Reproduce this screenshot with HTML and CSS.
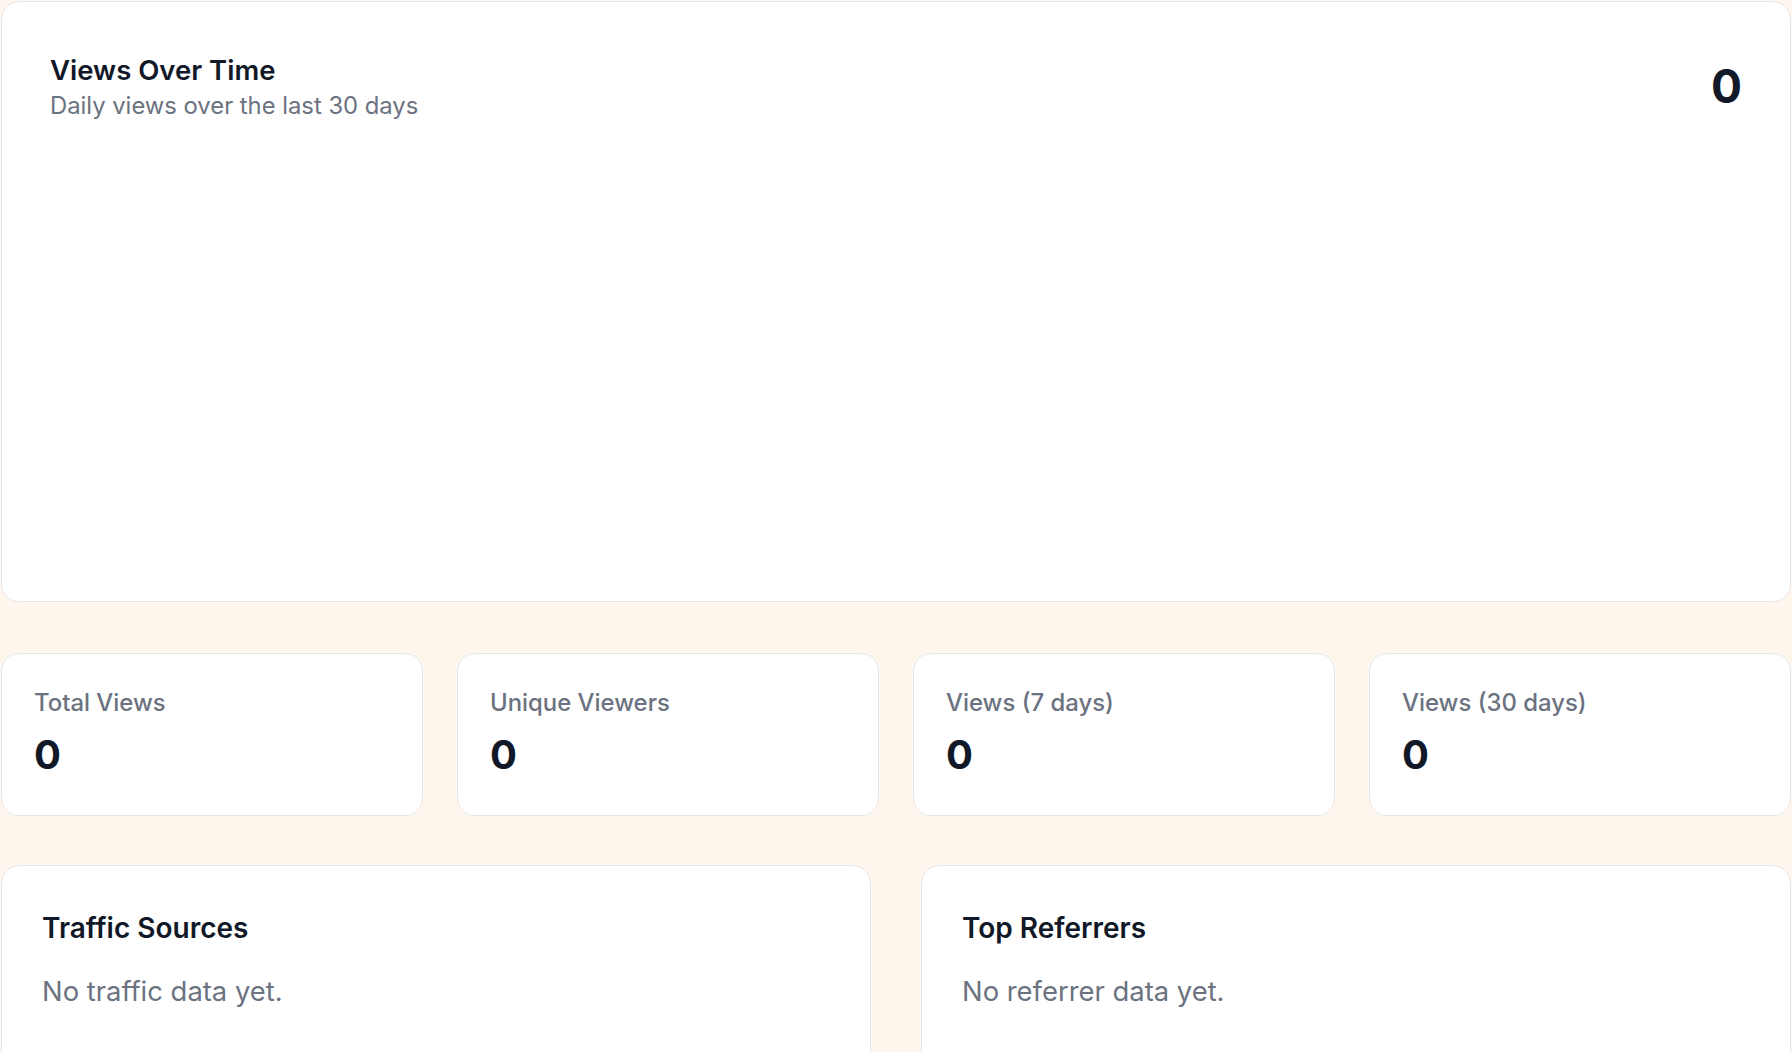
FILE: index.html
```html
<!DOCTYPE html>
<html lang="en">
<head>
<meta charset="utf-8">
<title>Analytics</title>
<link rel="stylesheet" href="styles.css">
</head>
<body>
<main class="page">
  <section class="card chart-card">
    <div class="chart-head">
      <div>
        <h2 class="card-title chart-title">Views Over Time</h2>
        <p class="card-sub">Daily views over the last 30 days</p>
      </div>
      <div class="chart-total">0</div>
    </div>
  </section>

  <section class="stats">
    <div class="card stat">
      <div class="stat-label">Total Views</div>
      <div class="stat-value">0</div>
    </div>
    <div class="card stat">
      <div class="stat-label">Unique Viewers</div>
      <div class="stat-value">0</div>
    </div>
    <div class="card stat">
      <div class="stat-label">Views (7 days)</div>
      <div class="stat-value">0</div>
    </div>
    <div class="card stat">
      <div class="stat-label">Views (30 days)</div>
      <div class="stat-value">0</div>
    </div>
  </section>

  <section class="lists">
    <div class="card list-card">
      <h3 class="card-title">Traffic Sources</h3>
      <p class="empty">No traffic data yet.</p>
    </div>
    <div class="card list-card">
      <h3 class="card-title">Top Referrers</h3>
      <p class="empty">No referrer data yet.</p>
    </div>
  </section>
</main>
</body>
</html>
```

FILE: styles.css
```css
* { box-sizing: border-box; }
html, body { margin: 0; padding: 0; }
body {
  background: #fff6ed;
  font-family: Inter, "Noto Sans", "Liberation Sans", sans-serif;
  color: #111827;
}
.page {
  padding: 1px 1px 0 1px;
  display: flex;
  flex-direction: column;
  gap: 51px;
}
.card {
  background: #ffffff;
  border: 1px solid #e5e7eb;
  border-radius: 18px;
}
.chart-card {
  height: 601px;
  padding: 52px 48px 0 41px;
}
.chart-head {
  display: flex;
  justify-content: space-between;
  align-items: flex-start;
  padding-left: 7px;
}
.card-title {
  margin: 0;
  font-size: 28px;
  line-height: 32px;
  font-weight: 600;
  color: #111827;
}
.chart-title {
  font-size: 27.5px;
}
.card-sub {
  margin: 6px 0 0;
  font-size: 23.8px;
  line-height: 28px;
  color: #6b7280;
}
.chart-total {
  font-size: 46px;
  line-height: 48px;
  font-weight: 700;
  margin-top: 8px;
  color: #111827;
}
.stats {
  display: grid;
  grid-template-columns: repeat(4, 1fr);
  gap: 34px;
}
.stat {
  padding: 35px 32px 35px;
}
.stat-label {
  font-size: 23.9px;
  line-height: 28px;
  font-weight: 500;
  color: #6b7280;
}
.stat-value {
  margin-top: 13px;
  font-size: 40px;
  line-height: 50px;
  font-weight: 700;
  color: #111827;
}
.lists {
  display: grid;
  grid-template-columns: 1fr 1fr;
  gap: 50px;
  margin-top: -2px;
}
.list-card {
  padding: 46px 40px 80px;
}
.empty {
  margin: 31px 0 0;
  font-size: 27.4px;
  line-height: 32px;
  color: #6b7280;
}
```
